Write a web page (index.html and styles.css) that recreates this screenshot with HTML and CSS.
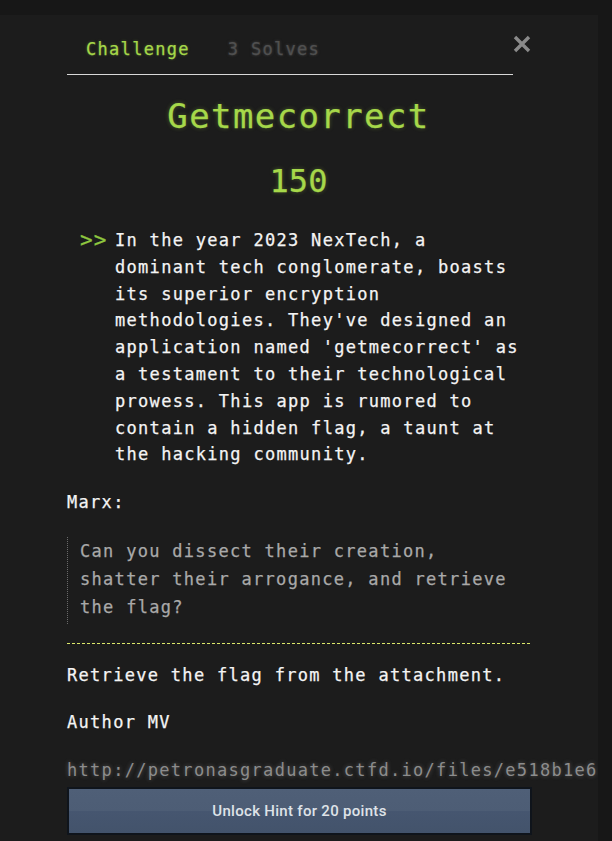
FILE: index.html
```html
<!DOCTYPE html>
<html>
<head>
<meta charset="utf-8">
<link rel="stylesheet" href="styles.css">
</head>
<body>
<div class="modal">
  <div class="tabs">
    <span class="tab active">Challenge</span>
    <span class="tab muted">3 Solves</span>
  </div>
  <button class="close" aria-label="Close">
    <svg width="20" height="20" viewBox="0 0 20 20"><path d="M3 3 L17 17 M17 3 L3 17" stroke="#8a8a8a" stroke-width="3.4" stroke-linecap="butt"/></svg>
  </button>
  <div class="body">
    <h1 class="title">Getmecorrect</h1>
    <div class="points">150</div>
    <div class="desc">
      <span class="marker">&gt;&gt;</span>
      <p>In the year 2023 NexTech, a dominant tech conglomerate, boasts its superior encryption methodologies. They've designed an application named 'getmecorrect' as a testament to their technological prowess. This app is rumored to contain a hidden flag, a taunt at the hacking community.</p>
    </div>
    <p class="line marx">Marx:</p>
    <blockquote class="quote">Can you dissect their creation, shatter their arrogance, and retrieve the flag?</blockquote>
    <hr class="dash">
    <p class="line retrieve">Retrieve the flag from the attachment.</p>
    <p class="line author">Author MV</p>
    <p class="line url">http://petronasgraduate.ctfd.io/files/e518b1e6</p>
    <button class="hint">Unlock Hint for 20 points</button>
  </div>
</div>
</body>
</html>
```
FILE: styles.css
```css
html, body {
  margin: 0;
  padding: 0;
  background: #171717;
  height: 841px;
  overflow: hidden;
}
.modal {
  position: relative;
  margin-top: 15px;
  width: 598px;
  height: 826px;
  background: #1c1c1c;
  box-sizing: border-box;
  padding-left: 67px;
  overflow: hidden;
  font-family: "DejaVu Sans Mono", "Liberation Mono", monospace;
  font-size: 17px;
  letter-spacing: 1.3px;
  color: #f4f4f4;
  -webkit-text-stroke: 0.25px currentColor;
}
.tabs {
  display: flex;
  width: 446px;
  padding-top: 22px;
  padding-bottom: 13px;
  border-bottom: 1px solid #d8d8d8;
  line-height: 24px;
}
.tab {
  padding: 0 19px;
}
.tab.active {
  color: #a6d84a;
  text-shadow: 0 0 3px rgba(166, 216, 74, 0.35);
}
.tab.muted {
  color: #505050;
  text-shadow: 0 0 3px rgba(120, 120, 120, 0.5);
}
.close {
  position: absolute;
  left: 512px;
  top: 19px;
  width: 20px;
  height: 20px;
  padding: 0;
  border: 0;
  background: none;
}
.close svg { display: block; }
.body {
  width: 463px;
}
.title {
  margin: 21px 0 0;
  text-align: center;
  font-size: 34px;
  font-weight: normal;
  letter-spacing: 1.4px;
  line-height: 40px;
  color: #a6d84a;
  text-shadow: 0 0 4px rgba(166, 216, 74, 0.35);
}
.points {
  margin-top: 25px;
  text-align: center;
  font-size: 32px;
  letter-spacing: 0;
  line-height: 40px;
  color: #a6d84a;
  text-shadow: 0 0 4px rgba(166, 216, 74, 0.35);
}
.desc {
  display: flex;
  margin-top: 26px;
  line-height: 26.8px;
}
.marker {
  flex: none;
  width: 35px;
  margin-left: 13px;
  color: #8ec63f;
  font-size: 21px;
  letter-spacing: 1px;
}
.desc p {
  margin: 0;
  width: 409px;
}
.line {
  margin: 0;
  line-height: 26.8px;
}
.marx { margin-top: 21px; }
.quote {
  margin: 21px 0 0;
  padding: 0 0 3px 12px;
  border-left: 1px dotted #6a6a6a;
  width: 440px;
  color: #a9a9a9;
  line-height: 28px;
}
.dash {
  margin: 19px 0 0;
  border: 0;
  border-top: 1px dashed #dbe86a;
  height: 0;
}
.retrieve { margin-top: 18.5px; }
.author { margin-top: 20.2px; }
.url {
  margin-top: 21.2px;
  width: 560px;
  white-space: nowrap;
  color: #8c8c8c;
  -webkit-text-stroke: 0;
  text-shadow: 0 0 4px rgba(170, 170, 170, 0.45);
}
.hint {
  display: block;
  margin-top: 2.6px;
  width: 465px;
  height: 48px;
  border: 2px solid #0f141b;
  background: linear-gradient(#4f5f77 0%, #4d5d75 50%, #465670 50%, #43536b 100%);
  color: #dfe3e8;
  font-family: Roboto, "Liberation Sans", sans-serif;
  font-size: 15px;
  font-weight: 500;
  letter-spacing: 0.3px;
  -webkit-text-stroke: 0;
  text-align: center;
  padding: 0;
}
```
